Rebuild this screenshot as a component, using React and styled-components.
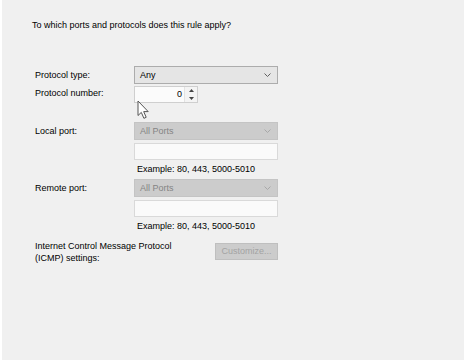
import styled, { createGlobalStyle } from "styled-components";

const Global = createGlobalStyle`
  html, body {
    margin: 0;
    padding: 0;
    background: #f0f0f0;
  }
  body {
    font-family: "Liberation Sans", Arial, sans-serif;
    font-size: 9px;
    color: #000;
  }
`;

const Page = styled.div`
  height: 360px;
  box-sizing: border-box;
  border-left: 2px solid #ffffff;
  background: #f0f0f0;
  padding: 19px 0 0 30px;
`;

const Heading = styled.p`
  margin: 0;
  line-height: 12px;
`;

const Form = styled.div`
  margin-top: 35px;
  padding-left: 3px;
  display: flex;
  flex-direction: column;
`;

const Row = styled.div`
  display: flex;
  align-items: flex-start;
  margin-top: ${(p) => p.$gap || 0}px;
`;

const Label = styled.div`
  width: 99px;
  flex: none;
  white-space: nowrap;
  line-height: ${(p) => p.$lh || 18}px;
`;

const Controls = styled.div`
  display: flex;
  flex-direction: column;
  width: 144px;
`;

const Select = styled.div`
  box-sizing: border-box;
  height: 18px;
  width: 144px;
  display: flex;
  align-items: center;
  justify-content: space-between;
  padding: 0 6px 0 5px;
  background: ${(p) => (p.$disabled ? "#cccccc" : "#e5e5e5")};
  border: 1px solid ${(p) => (p.$disabled ? "#c4c4c4" : "#acacac")};
  color: ${(p) => (p.$disabled ? "#848484" : "#000")};
`;

const TextBox = styled.div`
  box-sizing: border-box;
  height: 17px;
  width: 144px;
  margin-top: 3px;
  background: #fafafa;
  border: 1px solid #d9d9d9;
`;

const Example = styled.div`
  line-height: 12px;
  margin-top: 3px;
  padding-left: 3px;
`;

const Spinner = styled.div`
  position: relative;
  box-sizing: border-box;
  width: 64px;
  height: 17px;
  display: flex;
  background: #fbfbfb;
  border: 1px solid #cfcfcf;
`;

const SpinValue = styled.div`
  flex: 1;
  text-align: right;
  line-height: 15px;
  padding-right: 2px;
`;

const SpinButtons = styled.div`
  width: 12px;
  display: flex;
  flex-direction: column;
  border-left: 1px solid #e3e3e3;
  background: #f4f4f4;
`;

const SpinBtn = styled.div`
  flex: 1;
  display: flex;
  align-items: center;
  justify-content: center;
`;

const Cursor = styled.svg`
  position: absolute;
  left: 2px;
  top: 13px;
`;

const Button = styled.div`
  box-sizing: border-box;
  width: 63px;
  height: 17px;
  margin-left: 81px;
  margin-top: 2px;
  background: #cccccc;
  border: 1px solid #bfbfbf;
  color: #a3a3a3;
  text-align: center;
  line-height: 15px;
`;

function Chevron({ color }) {
  return (
    <svg width="7" height="4" viewBox="0 0 7 4">
      <path d="M0.5 0.5 L3.5 3.5 L6.5 0.5" fill="none" stroke={color} strokeWidth="1" />
    </svg>
  );
}

export default function App() {
  return (
    <>
      <Global />
      <Page>
        <Heading>To which ports and protocols does this rule apply?</Heading>
        <Form>
          <Row>
            <Label>Protocol type:</Label>
            <Select>
              <span>Any</span>
              <Chevron color="#606060" />
            </Select>
          </Row>
          <Row $gap={2}>
            <Label $lh={15}>Protocol number:</Label>
            <Spinner>
              <SpinValue>0</SpinValue>
              <SpinButtons>
                <SpinBtn>
                  <svg width="5" height="3" viewBox="0 0 5 3">
                    <path d="M0 3 L2.5 0 L5 3 Z" fill="#444" />
                  </svg>
                </SpinBtn>
                <SpinBtn>
                  <svg width="5" height="3" viewBox="0 0 5 3">
                    <path d="M0 0 L2.5 3 L5 0 Z" fill="#444" />
                  </svg>
                </SpinBtn>
              </SpinButtons>
              <Cursor width="13" height="20" viewBox="0 0 13 20">
                <path
                  d="M1 1 L1 15.5 L4.3 12.4 L6.9 18.3 L9.2 17.3 L6.7 11.6 L11.2 11.6 Z"
                  fill="#ffffff"
                  stroke="#555"
                  strokeWidth="1"
                  strokeLinejoin="round"
                />
              </Cursor>
            </Spinner>
          </Row>
          <Row $gap={19}>
            <Label>Local port:</Label>
            <Controls>
              <Select $disabled>
                <span>All Ports</span>
                <Chevron color="#a8a8a8" />
              </Select>
              <TextBox />
              <Example>Example: 80, 443, 5000-5010</Example>
            </Controls>
          </Row>
          <Row $gap={4}>
            <Label>Remote port:</Label>
            <Controls>
              <Select $disabled>
                <span>All Ports</span>
                <Chevron color="#a8a8a8" />
              </Select>
              <TextBox />
              <Example>Example: 80, 443, 5000-5010</Example>
            </Controls>
          </Row>
          <Row $gap={9}>
            <Label $lh={11.5}>
              Internet Control Message Protocol
              <br />
              (ICMP) settings:
            </Label>
            <Controls>
              <Button>Customize...</Button>
            </Controls>
          </Row>
        </Form>
      </Page>
    </>
  );
}
